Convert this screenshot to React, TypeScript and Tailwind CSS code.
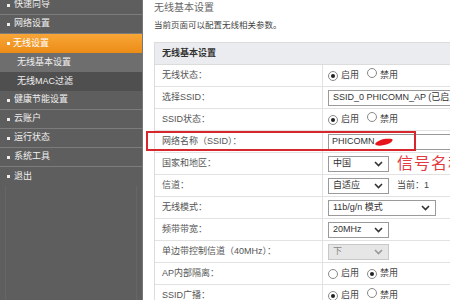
import React from "react";

const FONT = { fontFamily: '"Liberation Sans", "Noto Sans CJK SC", sans-serif' };

function Radio({ checked }: { checked: boolean }) {
  return (
    <span className="inline-flex h-[10px] w-[10px] items-center justify-center rounded-full border border-[#888] bg-white">
      {checked && <span className="h-[4px] w-[4px] rounded-full bg-[#222]" />}
    </span>
  );
}

function RadioPair({ on }: { on: boolean }) {
  return (
    <div className="flex items-center text-[9px] text-[#444]">
      <Radio checked={on} />
      <span className="ml-[3px]">启用</span>
      <span className="ml-[8px]"><Radio checked={!on} /></span>
      <span className="ml-[3px]">禁用</span>
    </div>
  );
}

function Chevron({ color = "#333" }: { color?: string }) {
  return (
    <svg width="9" height="6" viewBox="0 0 9 6" className="shrink-0">
      <path d="M1 1 L4.5 4.5 L8 1" fill="none" stroke={color} strokeWidth="1.6" />
    </svg>
  );
}

function Select({ text, w, disabled }: { text: string; w: string; disabled?: boolean }) {
  return (
    <div
      className={`flex h-[16px] items-center justify-between border pl-[4px] pr-[5px] text-[9px] ${w} ${
        disabled ? "border-[#c8c8c8] bg-[#e6e6e6] text-[#888]" : "border-[#9a9a9a] bg-white text-[#333]"
      }`}
    >
      <span>{text}</span>
      <Chevron color={disabled ? "#999" : "#333"} />
    </div>
  );
}

function Row({ label, children }: { label: string; children?: React.ReactNode }) {
  return (
    <div className="flex h-[22px] border-b border-[#e2e2e2]">
      <div className="flex w-[168px] shrink-0 items-center border-r border-[#e2e2e2] pl-[7px] text-[9px] text-[#555]">
        {label}
      </div>
      <div className="flex flex-1 items-center pl-[5px]">{children}</div>
    </div>
  );
}

const menu: { t: string; kind: "main" | "active" | "sub1" | "sub2" }[] = [
  { t: "快速向导", kind: "main" },
  { t: "网络设置", kind: "main" },
  { t: "无线设置", kind: "active" },
  { t: "无线基本设置", kind: "sub1" },
  { t: "无线MAC过滤", kind: "sub2" },
  { t: "健康节能设置", kind: "main" },
  { t: "云账户", kind: "main" },
  { t: "运行状态", kind: "main" },
  { t: "系统工具", kind: "main" },
  { t: "退出", kind: "main" },
];

export default function App() {
  return (
    <div className="relative flex h-[300px] w-[450px] overflow-hidden bg-white" style={FONT}>
      {/* Sidebar */}
      <div className="flex h-full w-[143px] shrink-0 flex-col border-r border-[#777] bg-[#5e5e5e]">
        <div className="mt-[-4px] flex flex-col">
          {menu.map((m, i) => {
            const base = "flex h-[19px] items-center text-[9px] text-[#f0f0f0]";
            if (m.kind === "active")
              return (
                <div key={i} className={`${base} bg-gradient-to-b from-[#f8a636] to-[#ec8c14] pl-[7px] text-white`}>
                  <span className="mr-[3px] inline-block h-[3px] w-[3px] bg-white" />
                  {m.t}
                </div>
              );
            if (m.kind === "sub1")
              return (
                <div key={i} className={`${base} bg-[#6e6e6e] pl-[17px]`}>
                  {m.t}
                </div>
              );
            if (m.kind === "sub2")
              return (
                <div key={i} className={`${base} bg-[#4f4f4f] pl-[17px]`}>
                  {m.t}
                </div>
              );
            return (
              <div key={i} className={`${base} ${i === menu.length - 1 ? "" : "border-b border-[#7c7c7c]"} pl-[7px]`}>
                <span className="mr-[4px] inline-block h-[3px] w-[3px] bg-[#eee]" />
                {m.t}
              </div>
            );
          })}
        </div>
        <div className="mx-[5px] flex-1 border-x border-[#666]" />
      </div>

      {/* Main */}
      <div className="flex min-w-0 flex-1 flex-col pl-[11px]">
        <div className="mt-[1px] h-[13px] text-[10px] leading-[13px] text-[#666]">无线基本设置</div>
        <div className="mt-[5px] h-[12px] text-[8.5px] leading-[12px] text-[#444]">当前页面可以配置无线相关参数。</div>
        <div className="mt-[11px] w-[320px] border-l border-t border-[#dcdcdc]">
          <div className="flex h-[22px] items-center border-b border-[#dcdcdc] bg-[#ebecef] pl-[7px] text-[9px] font-bold text-[#333]">
            无线基本设置
          </div>
          <Row label="无线状态：">
            <RadioPair on />
          </Row>
          <Row label="选择SSID：">
            <div className="flex h-[16px] w-[160px] items-center border border-[#9a9a9a] pl-[4px] text-[9px] whitespace-nowrap text-[#333]">
              SSID_0 PHICOMN_AP (已启用)
            </div>
          </Row>
          <Row label="SSID状态：">
            <RadioPair on />
          </Row>
          <Row label="网络名称（SSID）：">
            <div className="relative flex h-[16px] w-[160px] items-center border border-[#9a9a9a] pl-[3px] text-[9px] text-[#333]">
              PHICOMN
              <svg width="20" height="10" viewBox="0 0 20 10" className="ml-[-1px]">
                <path d="M1 7 C4 3, 10 1, 18 2 C20 3, 17 7, 10 8 C6 9, 2 9, 1 7 Z" fill="#e8141c" />
              </svg>
            </div>
          </Row>
          <Row label="国家和地区：">
            <Select text="中国" w="w-[61px]" />
            <span className="ml-[8px] text-[16px] leading-none tracking-[1px] whitespace-nowrap text-[#e23a3f]">信号名称</span>
          </Row>
          <Row label="信道：">
            <Select text="自适应" w="w-[61px]" />
            <span className="ml-[8px] text-[9px] text-[#444]">当前：1</span>
          </Row>
          <Row label="无线模式：">
            <Select text="11b/g/n 模式" w="w-[108px]" />
          </Row>
          <Row label="频带带宽：">
            <Select text="20MHz" w="w-[61px]" />
          </Row>
          <Row label="单边带控制信道（40MHz）：">
            <Select text="下" w="w-[61px]" disabled />
          </Row>
          <Row label="AP内部隔离：">
            <RadioPair on={false} />
          </Row>
          <Row label="SSID广播：">
            <RadioPair on />
          </Row>
        </div>
      </div>

      {/* Red highlight box */}
      <div className="absolute left-[146px] top-[131px] h-[20px] w-[270px] border-2 border-[#d8262d]" />
    </div>
  );
}
